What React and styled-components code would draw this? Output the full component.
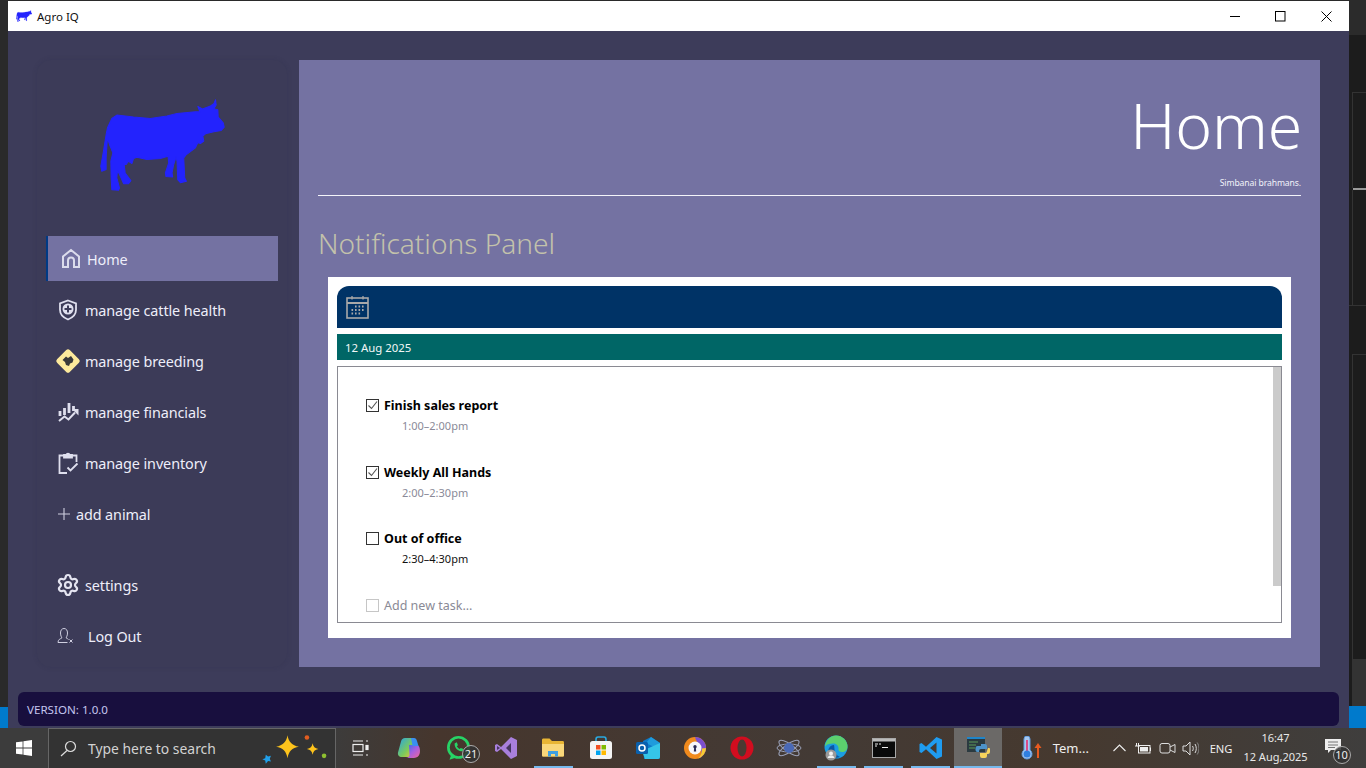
import React from "react";
import styled, { createGlobalStyle } from "styled-components";
import { Settings } from "lucide-react";

const Global = createGlobalStyle`
  html, body { margin: 0; padding: 0; background: #1c1c1c; }
  * { box-sizing: border-box; }
  body { font-family: "Noto Sans", "Open Sans", sans-serif; overflow: hidden; }
`;

const Screen = styled.div`
  width: 1366px; height: 768px; display: grid; grid-template-rows: 728px 40px; overflow: hidden;
`;
const Desktop = styled.div`
  display: grid; grid-template-columns: 8px 1341px 17px; background: #2a2a2a; padding-top: 1px; height: 728px;
`;
const LeftStrip = styled.div`
  display: flex; flex-direction: column; justify-content: flex-end; background: #2a2a2a;
`;
const BlueEdge = styled.div`
  height: 21px; background: #007acc;
`;
const RightStrip = styled.div`
  display: flex; flex-direction: column; background: #1c1c1c; margin-top: -1px; height: 728px;
`;
const StripPart = styled.div`
  height: ${p => p.$h}px; background: ${p => p.$bg || "#1c1c1c"};
  border-top: ${p => p.$line ? `1px solid ${p.$line}` : "none"};
  margin-left: ${p => p.$indent || 0}px;
  border-left: ${p => p.$left ? `1px solid ${p.$left}` : "none"};
`;
const Window = styled.div`
  display: flex; flex-direction: column; height: 727px;
`;
const TitleBar = styled.div`
  height: 30px; background: #fff; display: flex; align-items: center; padding-left: 8px; flex: none;
`;
const TitleText = styled.span`
  font-size: 11.5px; color: #111; margin-left: 5px; flex: 1;
`;
const WinButton = styled.div`
  width: 45.5px; height: 30px; display: flex; align-items: center; justify-content: center;
`;
const Body = styled.div`
  flex: 1; background: #3d3c5a; display: flex; flex-direction: column; padding-top: 29px;
`;
const Columns = styled.div`
  display: flex; gap: 12px; padding: 0 29px; height: 607px; flex: none;
`;
const Sidebar = styled.aside`
  width: 250px; background: #3c3b58; border-radius: 14px; padding: 0 9px;
  box-shadow: 0 0 5px rgba(40, 38, 66, .18); display: flex; flex-direction: column;
`;
const LogoWrap = styled.div`
  height: 176px; flex: none; padding: 39px 0 0 54px;
`;
const Nav = styled.nav`
  display: flex; flex-direction: column; gap: 6px;
`;
const NavItem = styled.div`
  height: 45px; display: flex; align-items: center; color: #eeeefa; font-size: 14.4px;
  padding-left: ${p => p.$pad}px; gap: ${p => p.$gap}px;
  margin-top: ${p => p.$top || 0}px;
  background: ${p => p.$active ? "#7472a2" : "transparent"};
  border-left: 2px solid ${p => p.$active ? "#003a85" : "transparent"};
  letter-spacing: -.1px;
`;
const NavLabel = styled.span`
  padding-top: 2px;
`;
const IconBox = styled.span`
  display: flex; align-items: center; justify-content: center; flex: none;
  width: ${p => p.$w}px; height: 26px;
`;
const Main = styled.main`
  width: 1021px; background: #7472a2; padding: 0 19px; display: flex; flex-direction: column;
`;
const PageTitle = styled.h1`
  margin: 0 -1px 0 0; height: 114px; text-align: right; color: #fff;
  font-weight: 300; font-size: 62.5px; line-height: 129px; letter-spacing: -.2px;
`;
const Subtitle = styled.div`
  height: 21px; padding-top: 2px; text-align: right; color: #f2f2fa; font-size: 8.6px; line-height: 14px; letter-spacing: -.1px;
`;
const Rule = styled.hr`
  margin: 0; border: 0; height: 1px; background: #f4f4fa; flex: none;
`;
const PanelTitle = styled.h2`
  margin: 0; height: 81px; font-weight: 300; font-size: 28.1px; line-height: 94px; color: #c3c2ab;
`;
const Card = styled.section`
  height: 361px; margin: 0 10px; background: #fff; padding: 9px; display: flex; flex-direction: column;
`;
const CardHead = styled.div`
  height: 42px; background: #003366; border-radius: 12px 12px 0 0; display: flex; align-items: center; padding-left: 9px; flex: none;
`;
const DateBar = styled.div`
  height: 26px; margin-top: 6px; background: #006666; color: #f2f7f7; font-size: 11.4px; display: flex; align-items: center; padding-left: 8px; flex: none;
`;
const TaskList = styled.div`
  height: 257px; margin-top: 6px; border: 1px solid #8a8a92; position: relative; overflow: hidden; padding: 30px 0 0 28px;
`;
const ScrollThumb = styled.div`
  position: absolute; top: 0; right: 0; width: 8px; height: 219px; background: #cbcbcb;
`;
const Task = styled.div`
  height: 66.5px;
`;
const TaskLine = styled.div`
  display: flex; align-items: center; gap: 5px; height: 17px;
`;
const Box = styled.span`
  width: 13px; height: 13px; flex: none; display: flex; border: 1px solid ${p => p.$ghost ? "#c6c6c6" : "#333"};
`;
const TaskName = styled.span`
  font-size: 12.5px; font-weight: ${p => p.$ghost ? 400 : 700}; color: ${p => p.$ghost ? "#8a8a96" : "#000"};
`;
const TaskTime = styled.div`
  margin: 3px 0 0 36px; font-size: 11px; line-height: 17px; color: ${p => p.$dark ? "#111" : "#8a8a98"};
`;
const Footer = styled.footer`
  height: 34px; margin: 25px 10px 0; background: #180f3e; border-radius: 6px; display: flex; align-items: center; padding-left: 9px;
  color: #c5c6f0; font-size: 11.6px; flex: none;
`;
const Taskbar = styled.div`
  height: 40px; display: flex; align-items: stretch; color: #eee;
  background: linear-gradient(90deg, #3c3c3c 0%, #3c3c3c 24%, #46362d 32%, #433a35 60%, #46392f 78%, #3f3e3d 100%);
`;
const StartBtn = styled.div`
  width: 48px; display: flex; align-items: center; justify-content: center; flex: none;
`;
const SearchBox = styled.div`
  width: 288px; background: #333; border: 1px solid #666; border-bottom: 0; display: flex; align-items: center; padding-left: 11px; flex: none;
`;
const SearchText = styled.span`
  font-size: 13.9px; color: #d2d2d2; margin-left: 11px; flex: 1;
`;
const Slots = styled.div`
  display: flex; margin-left: 5px; flex: none;
`;
const Slot = styled.div`
  width: 47.2px; flex: none; display: flex; align-items: center; justify-content: center; position: relative;
  padding-right: ${p => p.$nudge || 0}px;
  background: ${p => p.$active ? "#6b6967" : "transparent"};
  &::after {
    content: ""; position: absolute; bottom: 0; height: 2px; background: #76b9ed;
    left: ${p => p.$active ? 0 : 4}px; right: ${p => p.$active ? 0 : 4}px;
    display: ${p => p.$running || p.$active ? "block" : "none"};
  }
`;
const Badge = styled.span`
  position: absolute; right: ${p => p.$r}px; bottom: ${p => p.$b}px; width: 18px; height: 18px; border-radius: 50%;
  border: 1px solid #aaa; background: rgba(50,50,50,.85); color: #eee; font-size: 11px; line-height: 16px; text-align: center;
`;
const TrayLabel = styled.span`
  font-size: ${p => p.$s || 13}px; color: #eee; white-space: nowrap; margin-left: ${p => p.$ml || 0}px;
`;
const TempGroup = styled.div`
  display: flex; align-items: center; gap: 11px; margin-left: 18px; width: 88px; flex: none;
`;
const Tray = styled.div`
  display: flex; align-items: center; flex: 1;
`;
const TrayIcon = styled.span`
  display: flex; width: ${p => p.$w}px; justify-content: center; flex: none;
`;
const Clock = styled.div`
  width: 76px; margin-left: 5px; padding-bottom: 2px; text-align: center; font-size: 11px; line-height: 19px; color: #e8e8e8; flex: none;
`;
const Notify = styled.div`
  width: 40px; padding-bottom: 3px; display: flex; align-items: center; justify-content: center; position: relative; flex: none; align-self: stretch;
`;

const cowPath = "M322 390L335 362L350 352L400 358L450 362L500 355L530 347L585 342L598 342L592 326L606 334L630 325L640 318L645 306L647 322L640 333L652 336L653 358L668 375L671 388L662 398L640 402L615 408L607 415L610 430L600 437L592 435L585 450L558 470L550 480L553 540L558 550L540 554L532 545L530 490L527 478L520 500L515 525L517 537L497 536L495 525L505 495L503 475L480 482L440 485L410 478L400 482L395 497L385 490L378 500L372 500L375 525L392 548L385 557L370 557L358 530L352 518L350 540L358 570L355 577L335 575L333 540L332 490L338 465L328 440L322 420L318 480L318 515L305 520L302 505L310 460L318 410Z";
const Cow = ({ w, h }) => (
  <svg width={w} height={h} viewBox="300 304 373 275"><path d={cowPath} fill="#2323fd" stroke="#2323fd" strokeWidth="3" strokeLinejoin="round" /></svg>
);
const IHome = () => (
  <svg width="20" height="21" viewBox="0 0 20 21" fill="none" stroke="#dcdcec" strokeWidth="2"><path d="M2 19V8.500L10 2l8 6.500V19h-5v-6.500a3 3 0 0 0-6 0V19z" /></svg>
);
const IShield = () => (
  <svg width="20" height="22" viewBox="0 0 20 22"><path d="M10 1.500l8 2.800v6.500c0 4.800-3.500 8-8 9.700-4.500-1.700-8-4.900-8-9.700V4.300z" fill="none" stroke="#dfdfee" strokeWidth="1.800" /><circle cx="10" cy="10" r="5.500" fill="#dfdfee" /><path d="M10 6.500v7M6.500 10h7" stroke="#3c3b58" strokeWidth="2" /></svg>
);
const IDiamond = () => (
  <svg width="26" height="26" viewBox="0 0 26 26"><rect x="4" y="4" width="18" height="18" rx="2.500" transform="rotate(45 13 13)" fill="#fdea9c" /><path d="M7.500 12l3.500-3.500 2 1.500 3-2 2.500 3.500-1 3-2.500 1-1 2.500-3-1-1-3z" fill="#3a3a3a" /></svg>
);
const IChart = () => (
  <svg width="21" height="20" viewBox="0 0 21 20" fill="none" stroke="#dfdfee" strokeWidth="2"><path d="M2 9v5M6.500 6v7M11 1v10M15.500 4v5" strokeWidth="2.800" /><path d="M1 19l5.500-4.500 4 3 6.500-7" /><path d="M14 7h6.500v6.500z" fill="#dfdfee" stroke="none" /></svg>
);
const IClip = () => (
  <svg width="21" height="22" viewBox="0 0 21 22" fill="none" stroke="#dfdfee" strokeWidth="1.800"><path d="M6 3.500H1.500V21H9" /><path d="M14 3.500h4.500V10" /><path d="M6 5.500V2.800h2.200a2 2 0 0 1 3.600 0H14v2.700z" fill="#dfdfee" /><path d="M9.500 15.500l3 3 7-7" /></svg>
);
const IPlus = () => (
  <svg width="14" height="14" viewBox="0 0 14 14" stroke="#cfcfe0" strokeWidth="1.100"><path d="M7 1v12M1 7h12" /></svg>
);
const ILogout = () => (
  <svg width="17" height="17" viewBox="0 0 17 17" fill="none" stroke="#cfcfe0" strokeWidth="1"><path d="M1 15.500c0-3 2-3.500 3.800-4.500 0-1-1.300-2-1.300-5 0-3 1.500-4.500 3.500-4.500s3.500 1.500 3.500 4.500c0 3-1.300 4-1.300 5 .8.500 1.800.8 2.300 1.500" /><path d="M1 15.500h9.500" /><path d="M12.500 12.500l3 3M15.500 12.500l-3 3" /></svg>
);
const ICalendar = () => (
  <svg width="23" height="24" viewBox="0 0 23 24" fill="none" stroke="#a9a9a9" strokeWidth="1.600"><rect x="1" y="3" width="21" height="20" /><path d="M1 8h21" strokeWidth="2" /><path d="M6 1v3.500M17 1v3.500" strokeWidth="1.300" /><path d="M9 11.500h1.600M12.500 11.500h1.600M16 11.500h1.600M5.500 15h1.600M9 15h1.600M12.500 15h1.600M16 15h1.600M5.500 18.500h1.600M9 18.500h1.600M12.500 18.500h1.600" strokeWidth="1.800" /></svg>
);
const Tick = () => (
  <svg width="11" height="11" viewBox="0 0 11 11" fill="none" stroke="#555" strokeWidth="1.100"><path d="M1.500 5.500l3 3 5.500-7" /></svg>
);
const WinLogo = () => (
  <svg width="16" height="16" viewBox="0 0 16 16" fill="#fff"><path d="M0 2.300l6.600-.9v6.200H0zM7.400 1.300L16 0v7.600H7.400zM0 8.400h6.600v6.200L0 13.700zM7.400 8.400H16V16l-8.600-1.300z" /></svg>
);
const IconSearch = () => (
  <svg width="17" height="17" viewBox="0 0 17 17" fill="none" stroke="#ddd" strokeWidth="1.200"><circle cx="10.500" cy="6.500" r="5" /><path d="M7 10.500L1 16" /></svg>
);
const SparkleSvg = styled.svg`
  margin-right: 4px; flex: none;
`;
const Sparkles = () => (
  <SparkleSvg width="71" height="32" viewBox="0 0 62 28">
    <path d="M24 2c1 6 4 9 10 10-6 1-9 4-10 10-1-6-4-9-10-10 6-1 9-4 10-10z" fill="#fdc31c" />
    <path d="M46 9c.5 3 2 4.500 5 5-3 .5-4.500 2-5 5-.5-3-2-4.500-5-5 3-.5 4.500-2 5-5z" fill="#fdc31c" />
    <circle cx="41" cy="4" r="2" fill="#e25d20" /><circle cx="56" cy="20" r="2" fill="#8fc031" />
    <path d="M5 19l2 1.500 2.500-.5-1 2.500L9.500 25 7 24.500 5 27l-.500-3-2.500-1 2.500-1z" fill="#21a0ea" />
  </SparkleSvg>
);
const TaskView = () => (
  <svg width="17" height="16" viewBox="0 0 17 16" fill="none" stroke="#eee" strokeWidth="1.200"><path d="M1 1h10M1 15h10" /><rect x="1" y="4.500" width="10" height="7" /><path d="M14 1h2M14 15h2" /><rect x="14" y="5.500" width="2" height="4" fill="#eee" /></svg>
);
const Copilot = () => (
  <svg width="24" height="22" viewBox="0 0 24 22"><defs><linearGradient id="cpa" x1="0" y1="0" x2="1" y2="1"><stop offset="0" stopColor="#25a4e8" /><stop offset=".6" stopColor="#7dcb5a" /><stop offset="1" stopColor="#f5c13a" /></linearGradient><linearGradient id="cpb" x1="0" y1="0" x2="1" y2="1"><stop offset="0" stopColor="#2f6fe8" /><stop offset=".5" stopColor="#a65fe0" /><stop offset="1" stopColor="#f0669a" /></linearGradient></defs><path d="M8 1h6c1.500 0 2.500 1 3 2.500L13 20H5c-3 0-4.500-2-4-4.500l3-11C4.500 2.500 6 1 8 1z" fill="url(#cpa)" /><path d="M12 8h8c1 0 2 1 2.500 2.500 1 4 1 10-5.500 10.500h-8c2 0 3-1 3.500-3z" fill="url(#cpb)" /><path d="M14 1l3 0c1.500 0 2.500 1 3 3l1.500 5h-6z" fill="#3a8ff0" /></svg>
);
const WhatsApp = () => (
  <svg width="25" height="27" viewBox="0 0 22 24" fill="none"><circle cx="11" cy="11" r="9" stroke="#27d366" strokeWidth="2.400" /><path d="M3 22l2-6 4 4z" fill="#27d366" /><path d="M7.500 7.500c0 4 3 7 7 7l1-2-2.500-1-1 1c-1-.5-2-1.500-2.500-2.500l1-1-1-2.500z" fill="#27d366" /></svg>
);
const VisualStudio = () => (
  <svg width="24" height="24" viewBox="0 0 24 24"><path d="M17 1l6 3v16l-6 3L7 13l-4 3-2-1V9l2-1 4 3z" fill="#a87fdc" /><path d="M17 7l-5 5 5 5z" fill="#46365f" /><path d="M3 10l3 2-3 2z" fill="#46365f" /></svg>
);
const Explorer = () => (
  <svg width="22" height="20" viewBox="0 0 22 20"><path d="M0 2c0-1 .5-1.500 1.500-1.500h6L10 3h10.500c1 0 1.500.5 1.500 1.500V17c0 1-.5 1.500-1.500 1.500h-19C.5 18.500 0 18 0 17z" fill="#e8b534" /><path d="M0 6h22v11c0 1-.5 1.500-1.500 1.500h-19C.5 18.500 0 18 0 17z" fill="#f9d77a" /><path d="M6 18.500V13h10v5.500h-3V16H9v2.500z" fill="#3f9fe0" /></svg>
);
const Store = () => (
  <svg width="24" height="24" viewBox="0 0 24 24"><path d="M7 6V3.500C7 2 8 1 9 1h6c1 0 2 1 2 2.500V6" fill="none" stroke="#2aa9e0" strokeWidth="1.600" /><rect x="1" y="5" width="22" height="18" rx="2.500" fill="#f4f4f4" /><rect x="7" y="9" width="4.500" height="4.500" fill="#f25022" /><rect x="12.500" y="9" width="4.500" height="4.500" fill="#7fba00" /><rect x="7" y="14.500" width="4.500" height="4.500" fill="#00a4ef" /><rect x="12.500" y="14.500" width="4.500" height="4.500" fill="#ffb900" /></svg>
);
const Outlook = () => (
  <svg width="24" height="24" viewBox="0 0 24 24"><path d="M7 5l8-4 9 6v14a2 2 0 0 1-2 2H8z" fill="#0c78c8" /><path d="M15 1l9 6-6 4-8-4z" fill="#1f9bdc" /><path d="M6 15l9-4 9-4v14a2 2 0 0 1-2 2H9z" fill="#35c5e8" /><rect x="0" y="6" width="12" height="12" rx="1.500" fill="#0a60ad" /><circle cx="6" cy="12" r="3" fill="none" stroke="#fff" strokeWidth="1.500" /></svg>
);
const ShieldBrowser = () => (
  <svg width="24" height="24" viewBox="0 0 24 24"><circle cx="12" cy="12" r="11" fill="#f08a1d" /><path d="M12 1a11 11 0 0 1 11 11c0 4-3 8-6 10 2-4 2-9-1-13-1-2-3-4-4-8z" fill="#7b4fd0" /><path d="M23 12a11 11 0 0 1-8 10.500c3-3 4-6 4-10z" fill="#f6cb32" /><circle cx="12" cy="12" r="6.500" fill="#f6f6fb" /><circle cx="12" cy="10.700" r="1.700" fill="#2a2a55" /><path d="M11.200 11.500h1.600l.4 4h-2.400z" fill="#2a2a55" /></svg>
);
const Opera = () => (
  <svg width="24" height="24" viewBox="0 0 24 24"><circle cx="12" cy="12" r="11.500" fill="#d20d1f" /><ellipse cx="12" cy="12" rx="4.500" ry="8.500" fill="#4a3a32" /></svg>
);
const Atom = () => (
  <svg width="26" height="20" viewBox="0 0 26 20" fill="none" stroke="#9aa0b8" strokeWidth="1"><ellipse cx="13" cy="10" rx="12" ry="4" /><ellipse cx="13" cy="10" rx="12" ry="4" transform="rotate(35 13 10)" /><ellipse cx="13" cy="10" rx="12" ry="4" transform="rotate(-35 13 10)" /><circle cx="13" cy="10" r="5" fill="#4a69b6" stroke="none" /></svg>
);
const Edge = () => (
  <svg width="26" height="26" viewBox="0 0 26 26"><circle cx="13" cy="12" r="11.500" fill="#1b9de2" /><path d="M13 .5A11.500 11.500 0 0 1 24.500 12c0 3-2.500 5-5.500 5-2 0-4-1-3.500-3 .5-3-2-5.500-5-5.500S3 9 2 12C2 6 7 .5 13 .5z" fill="#5ccf6e" /><path d="M10 22c-4-1-6-5-4-9 1-2 3-3 5-3 1 3-1 9 6 12-2 1-5 1-7 0z" fill="#0c59a4" /><circle cx="8" cy="20" r="5.500" fill="#9a9a9a" /><circle cx="8" cy="18.500" r="2" fill="#f0f0f0" /><path d="M4.500 23c.5-2 2-2.500 3.500-2.500s3 .5 3.500 2.500z" fill="#f0f0f0" /></svg>
);
const Cmd = () => (
  <svg width="24" height="20" viewBox="0 0 24 20"><rect x=".5" y=".5" width="23" height="19" fill="#0a0a0a" stroke="#a8a8a8" /><rect x="1" y="1" width="22" height="2.500" fill="#bbb" /><path d="M3 6h3M3 8h2M7 6h2M10 9.500h6" stroke="#eee" strokeWidth="1" /></svg>
);
const VSCode = () => (
  <svg width="24" height="24" viewBox="0 0 24 24"><path d="M17.500 1L23 3.500v17L17.500 23 7 13.300 2.500 17 .5 16V8l2-1L7 10.700zM17.500 6.500L11 12l6.500 5.500z" fill="#1f9cf0" /></svg>
);
const PythonApp = () => (
  <svg width="24" height="24" viewBox="0 0 24 24"><rect x="1" y="1" width="18" height="15" fill="#2b3a40" /><rect x="1" y="1" width="18" height="2" fill="#1f85c9" /><path d="M3 6h9M3 9h7M3 12h6" stroke="#5d9a5a" strokeWidth="1.200" /><path d="M15 8h4a2 2 0 0 1 2 2v3h-6a2 2 0 0 0-2 2v1h-1.500a2 2 0 0 1-2-2v-2a2 2 0 0 1 2-2H15z" fill="#4d93c9" /><path d="M22 12h1a1 1 0 0 1 1 1v3a2 2 0 0 1-2 2h-1v2a2 2 0 0 1-2 2h-3a2 2 0 0 1-2-2v-3h5a2 2 0 0 0 2-2z" fill="#f6d35c" /></svg>
);
const Thermo = () => (
  <svg width="22" height="24" viewBox="0 0 22 24"><path d="M4 3a3 3 0 0 1 6 0v11a5 5 0 1 1-6 0z" fill="#a8c8f0" stroke="#5d9ae0" strokeWidth="1" /><rect x="6" y="4" width="2" height="12" fill="#d84a8a" /><circle cx="7" cy="18" r="3.500" fill="#2f7fe0" /><path d="M18 9v13" stroke="#e85a20" strokeWidth="2" /><path d="M14.500 12l3.500-5 3.500 5z" fill="#e85a20" /></svg>
);
const Chevron = () => (
  <svg width="13" height="8" viewBox="0 0 13 8" fill="none" stroke="#eee" strokeWidth="1.100"><path d="M.5 7l6-6 6 6" /></svg>
);
const Battery = () => (
  <svg width="17" height="11" viewBox="0 0 17 11" fill="none" stroke="#eee"><rect x="3.500" y="2.500" width="11.500" height="7.500" /><rect x="5" y="4" width="8" height="4.500" fill="#eee" stroke="none" /><path d="M15.500 4.500v3.500" /><path d="M0 3h5M1.500 0v3M3.500 0v3" /></svg>
);
const Cam = () => (
  <svg width="17" height="17" viewBox="0 0 17 17" fill="none" stroke="#ddd"><rect x="1" y="3.500" width="10" height="9.500" rx="2" /><path d="M11 7l5-2.500v8L11 10" /></svg>
);
const Speaker = () => (
  <svg width="17" height="15" viewBox="0 0 17 15" fill="none" stroke="#ddd"><path d="M1 5h3l4-4v13l-4-4H1z" /><path d="M10.500 5c1 1.500 1 3.500 0 5M13 3c1.700 2.500 1.700 6.500 0 9" /><path d="M15.200 1.500c2.300 3.500 2.300 8.500 0 12" stroke="#888" /></svg>
);
const Chat = () => (
  <svg width="17" height="16" viewBox="0 0 17 16"><path d="M0 0h16v11H6l-3 3v-3H0z" fill="#eee" /><path d="M3 3h10M3 6h10M3 8.500h7" stroke="#555" strokeWidth=".800" /></svg>
);

const navItems = [
  { label: "manage cattle health", icon: <IShield />, w: 22, pad: 9, gap: 6 },
  { label: "manage breeding", icon: <IDiamond />, w: 26, pad: 7, gap: 4 },
  { label: "manage financials", icon: <IChart />, w: 22, pad: 9, gap: 6 },
  { label: "manage inventory", icon: <IClip />, w: 22, pad: 9, gap: 6 },
  { label: "add animal", icon: <IPlus />, w: 14, pad: 9, gap: 5 },
  { label: "settings", icon: <Settings size={24} color="#e4e4f0" strokeWidth={2.2} />, w: 24, pad: 8, gap: 5, top: 20 },
  { label: "Log Out", icon: <ILogout />, w: 17, pad: 9, gap: 14 },
];
const tasks = [
  { name: "Finish sales report", time: "1:00–2:00pm", done: true },
  { name: "Weekly All Hands", time: "2:00–2:30pm", done: true },
  { name: "Out of office", time: "2:30–4:30pm", dark: true },
  { name: "Add new task...", time: "4:00–5:00pm", ghost: true },
];
const apps = [
  { el: <TaskView />, nudge: 9 }, { el: <Copilot />, nudge: 6 },
  { el: <WhatsApp />, badge: "21" }, { el: <VisualStudio /> },
  { el: <Explorer />, running: true }, { el: <Store /> }, { el: <Outlook /> },
  { el: <ShieldBrowser /> }, { el: <Opera /> }, { el: <Atom /> },
  { el: <Edge />, running: true }, { el: <Cmd />, running: true },
  { el: <VSCode />, running: true }, { el: <PythonApp />, active: true },
];

export default function App() {
  return (
    <Screen>
      <Global />
      <Desktop>
        <LeftStrip><BlueEdge /></LeftStrip>
        <Window>
          <TitleBar>
            <Cow w={16} h={12} />
            <TitleText>Agro IQ</TitleText>
            <WinButton><svg width="11" height="11" viewBox="0 0 11 11" stroke="#000"><path d="M0 5.500h10" /></svg></WinButton>
            <WinButton><svg width="11" height="11" viewBox="0 0 11 11" fill="none" stroke="#000"><rect x=".5" y=".5" width="9.500" height="9.500" /></svg></WinButton>
            <WinButton><svg width="11" height="11" viewBox="0 0 11 11" stroke="#000"><path d="M.5.500l10 10M10.500.500l-10 10" /></svg></WinButton>
          </TitleBar>
          <Body>
            <Columns>
              <Sidebar>
                <LogoWrap><Cow w={125} h={92} /></LogoWrap>
                <Nav>
                  <NavItem $active $pad={12} $gap={6}><IconBox $w={21}><IHome /></IconBox><NavLabel>Home</NavLabel></NavItem>
                  {navItems.map(n => (
                    <NavItem key={n.label} $pad={n.pad} $gap={n.gap} $top={n.top}>
                      <IconBox $w={n.w}>{n.icon}</IconBox><NavLabel>{n.label}</NavLabel>
                    </NavItem>
                  ))}
                </Nav>
              </Sidebar>
              <Main>
                <PageTitle>Home</PageTitle>
                <Subtitle>Simbanai brahmans.</Subtitle>
                <Rule />
                <PanelTitle>Notifications Panel</PanelTitle>
                <Card>
                  <CardHead><ICalendar /></CardHead>
                  <DateBar>12 Aug 2025</DateBar>
                  <TaskList>
                    <ScrollThumb />
                    {tasks.map(t => (
                      <Task key={t.name}>
                        <TaskLine>
                          <Box $ghost={t.ghost}>{t.done && <Tick />}</Box>
                          <TaskName $ghost={t.ghost}>{t.name}</TaskName>
                        </TaskLine>
                        <TaskTime $dark={t.dark}>{t.time}</TaskTime>
                      </Task>
                    ))}
                  </TaskList>
                </Card>
              </Main>
            </Columns>
            <Footer>VERSION: 1.0.0</Footer>
          </Body>
        </Window>
        <RightStrip>
          <StripPart $h={35} $bg="#2b2b2b" />
          <StripPart $h={57} />
          <StripPart $h={96} $indent={3} $left="#333" $line="#333" />
          <StripPart $h={2} $bg="#9a9a9a" $indent={4} />
          <StripPart $h={115} $indent={3} $left="#333" />
          <StripPart $h={49} $line="#333" />
          <StripPart $h={305} $indent={3} $left="#333" $line="#333" />
          <StripPart $h={47} $bg="#333" $indent={3} />
          <StripPart $h={22} $bg="#007acc" />
        </RightStrip>
      </Desktop>
      <Taskbar>
        <StartBtn><WinLogo /></StartBtn>
        <SearchBox>
          <IconSearch />
          <SearchText>Type here to search</SearchText>
          <Sparkles />
        </SearchBox>
        <Slots>
          {apps.map((a, i) => (
            <Slot key={i} $running={a.running} $active={a.active} $nudge={a.nudge}>
              {a.el}
              {a.badge && <Badge $r={2.6} $b={5}>{a.badge}</Badge>}
            </Slot>
          ))}
        </Slots>
        <TempGroup><Thermo /><TrayLabel>Tem...</TrayLabel></TempGroup>
        <Tray>
          <TrayIcon $w={24}><Chevron /></TrayIcon>
          <TrayIcon $w={24}><Battery /></TrayIcon>
          <TrayIcon $w={24}><Cam /></TrayIcon>
          <TrayIcon $w={22}><Speaker /></TrayIcon>
          <TrayLabel $s={11.2} $ml={8}>ENG</TrayLabel>
          <Clock>16:47<br />12 Aug,2025</Clock>
          <Notify><Chat /><Badge $r={3} $b={4}>10</Badge></Notify>
        </Tray>
      </Taskbar>
    </Screen>
  );
}
